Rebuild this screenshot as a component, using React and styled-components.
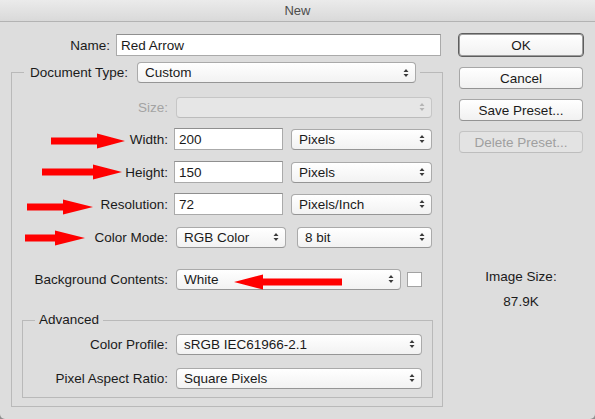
import React from "react";
import styled, { createGlobalStyle } from "styled-components";

const GlobalStyle = createGlobalStyle`
  html, body {
    margin: 0;
    padding: 0;
    background: #8e8e8e;
  }
  body {
    font-family: "Liberation Sans", Arial, sans-serif;
  }
`;

const Window = styled.div`
  position: relative;
  width: 595px;
  height: 419px;
  background: #dddddd;
  border-radius: 0 0 5px 5px;
  overflow: hidden;
  font-size: 13.5px;
  color: #1a1a1a;
`;

const TitleBar = styled.div`
  height: 22px;
  box-sizing: border-box;
  border-bottom: 1px solid #b3b3b3;
  background: linear-gradient(#ebebeb, #d9d9d9);
  display: flex;
  align-items: center;
  justify-content: center;
  font-size: 13px;
  color: #4d4d4d;
`;

const Body = styled.div`
  display: flex;
  gap: 15px;
  padding: 11px 11px 0 11px;
`;

const LeftCol = styled.div`
  width: 432px;
  display: flex;
  flex-direction: column;
`;

const RightCol = styled.div`
  width: 126px;
  display: flex;
  flex-direction: column;
  gap: 10px;
`;

const Row = styled.div`
  display: flex;
  align-items: center;
  height: 22px;
  margin-top: ${p => p.$gap || 0}px;
`;

const Label = styled.label`
  width: ${p => p.$w}px;
  margin-right: 6px;
  text-align: right;
  white-space: nowrap;
  color: ${p => (p.$disabled ? "#a3a3a3" : "inherit")};
`;

const TextInput = styled.input`
  width: ${p => p.$w}px;
  height: 22px;
  box-sizing: border-box;
  margin: 0;
  padding: 0 4px;
  border: 1px solid #aaaaaa;
  border-top-color: #8f8f8f;
  background: #fff;
  font: inherit;
  color: inherit;
  outline: none;
`;

const PopUp = styled.div`
  width: ${p => p.$w}px;
  height: 21px;
  box-sizing: border-box;
  margin-left: ${p => (p.$ml === undefined ? 2 : p.$ml)}px;
  margin-right: ${p => p.$mr || 0}px;
  display: flex;
  align-items: center;
  justify-content: space-between;
  padding: 0 6px 0 7px;
  border: 1px solid ${p => (p.$disabled ? "#c6c6c6" : "#aaaaaa")};
  border-bottom-color: ${p => (p.$disabled ? "#bcbcbc" : "#959595")};
  border-radius: 4px;
  background: ${p =>
    p.$disabled ? "#e6e6e6" : "linear-gradient(#ffffff, #f2f2f2)"};
  color: ${p => (p.$disabled ? "#a3a3a3" : "inherit")};
  white-space: nowrap;
`;

const Chevron = ({ color = "#3b3b3b" }) => (
  <svg width="6" height="10" viewBox="0 0 6 10">
    <path d="M3 1L5.5 4H0.5Z M3 9L0.5 6H5.5Z" fill={color} />
  </svg>
);

const Select = ({ value, disabled, ...rest }) => (
  <PopUp $disabled={disabled} {...rest}>
    <span>{value}</span>
    <Chevron color={disabled ? "#b5b5b5" : "#3b3b3b"} />
  </PopUp>
);

const Group = styled.fieldset`
  margin: ${p => p.$mt || 0}px ${p => p.$mr || 0}px 0 ${p => p.$ml || 0}px;
  padding: ${p => p.$pt}px 0 ${p => p.$pb}px 0;
  border: 1px solid #b9b9b9;
  min-width: 0;
  box-sizing: border-box;
`;

const Legend = styled.legend`
  margin-left: 12px;
  padding: 0 4px 0 ${p => p.$pl || 4}px;
  line-height: 16px;
`;

const LegendInner = styled.span`
  display: inline-flex;
  align-items: center;
  gap: 7px;
`;

const Swatch = styled.div`
  width: 15px;
  height: 15px;
  box-sizing: border-box;
  border: 1px solid #a3a3a3;
  background: #fff;
`;

const Button = styled.div`
  height: 22px;
  box-sizing: border-box;
  margin: 0 1px;
  display: flex;
  align-items: center;
  justify-content: center;
  border: 1px solid ${p => (p.$disabled ? "#c4c4c4" : "#a7a7a7")};
  border-bottom-color: ${p => (p.$disabled ? "#bdbdbd" : "#939393")};
  border-radius: 4px;
  background: ${p =>
    p.$disabled ? "#e3e3e3" : "linear-gradient(#ffffff, #f1f1f1)"};
  color: ${p => (p.$disabled ? "#9f9f9f" : "inherit")};
`;

const DefaultButton = styled(Button)`
  margin: 0;
  height: 24px;
  border: 1px solid #5e5e5e;
  box-shadow: inset 0 0 0 1px #9c9c9c;
`;

const InfoBlock = styled.div`
  margin-top: 106px;
  display: flex;
  flex-direction: column;
  align-items: center;
  gap: 9px;
  line-height: 16px;
`;

const ArrowSvg = styled.svg`
  position: absolute;
  left: ${p => p.$x}px;
  top: ${p => p.$y - 8}px;
`;

const Arrow = ({ x, y, length, head, left }) => {
  const L = length;
  const H = head;
  const pts = left
    ? `${L},4.5 ${H},4.5 ${H},0.5 0,8 ${H},15.5 ${H},11.5 ${L},11.5`
    : `0,4.5 ${L - H},4.5 ${L - H},0.5 ${L},8 ${L - H},15.5 ${L - H},11.5 0,11.5`;
  return (
    <ArrowSvg $x={x} $y={y} width={L} height="16" viewBox={`0 0 ${L} 16`}>
      <polygon points={pts} fill="#ff0000" />
    </ArrowSvg>
  );
};

export default function App() {
  return (
    <>
      <GlobalStyle />
      <Window>
        <TitleBar>New</TitleBar>
        <Body>
          <LeftCol>
            <Row $gap={1}>
              <Label $w={99}>Name:</Label>
              <TextInput $w={325} defaultValue="Red Arrow" />
            </Row>

            <Group $mt={6} $pt={13} $pb={8}>
              <Legend $pl={6}>
                <LegendInner>
                  <span>Document Type:</span>
                  <Select value="Custom" $w={279} $ml={2} />
                </LegendInner>
              </Legend>

              <Row>
                <Label $w={156} $disabled>Size:</Label>
                <Select value="" disabled $w={256} />
              </Row>
              <Row $gap={10}>
                <Label $w={156}>Width:</Label>
                <TextInput $w={109} defaultValue="200" />
                <Select value="Pixels" $w={141} $ml={8} />
              </Row>
              <Row $gap={11}>
                <Label $w={156}>Height:</Label>
                <TextInput $w={109} defaultValue="150" />
                <Select value="Pixels" $w={141} $ml={8} />
              </Row>
              <Row $gap={10}>
                <Label $w={156}>Resolution:</Label>
                <TextInput $w={109} defaultValue="72" />
                <Select value="Pixels/Inch" $w={141} $ml={8} />
              </Row>
              <Row $gap={11}>
                <Label $w={156}>Color Mode:</Label>
                <Select value="RGB Color" $w={110} />
                <Select value="8 bit" $w={135} $ml={11} />
              </Row>
              <Row $gap={20}>
                <Label $w={156}>Background Contents:</Label>
                <Select value="White" $w={225} $mr={6} />
                <Swatch />
              </Row>

              <Group $mt={22} $ml={10} $mr={9} $pt={5} $pb={8}>
                <Legend>Advanced</Legend>
                <Row>
                  <Label $w={145}>Color Profile:</Label>
                  <Select value="sRGB IEC61966-2.1" $w={246} />
                </Row>
                <Row $gap={12}>
                  <Label $w={145}>Pixel Aspect Ratio:</Label>
                  <Select value="Square Pixels" $w={246} />
                </Row>
              </Group>
            </Group>
          </LeftCol>

          <RightCol>
            <DefaultButton>OK</DefaultButton>
            <Button>Cancel</Button>
            <Button>Save Preset...</Button>
            <Button $disabled>Delete Preset...</Button>
            <InfoBlock>
              <span>Image Size:</span>
              <span>87.9K</span>
            </InfoBlock>
          </RightCol>
        </Body>

        <Arrow x={51} y={141} length={74} head={28} />
        <Arrow x={42} y={172} length={80} head={29} />
        <Arrow x={27} y={207} length={66} head={30} />
        <Arrow x={25} y={238} length={60} head={30} />
        <Arrow x={234} y={282} length={108} head={29} left />
      </Window>
    </>
  );
}
